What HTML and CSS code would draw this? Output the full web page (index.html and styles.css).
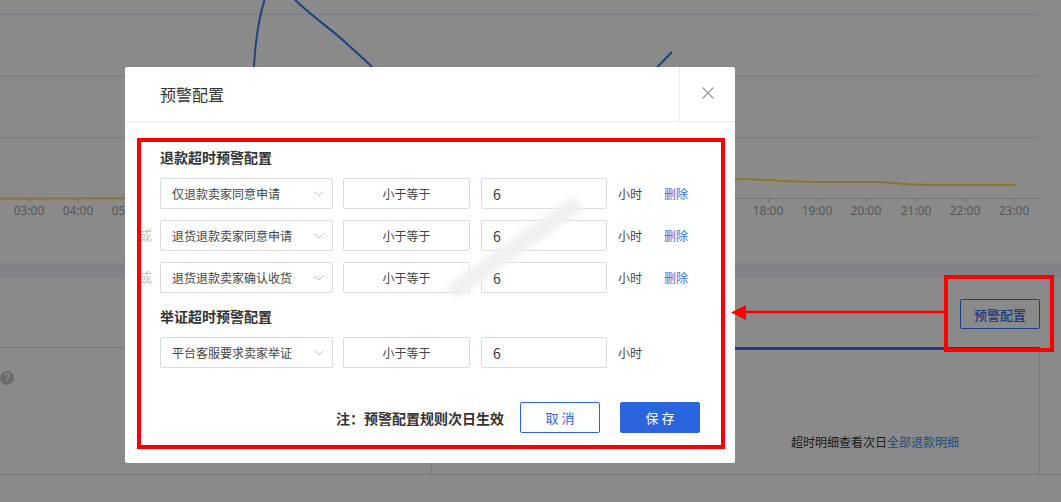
FILE: index.html
```html
<!DOCTYPE html>
<html lang="zh-CN">
<head>
<meta charset="utf-8">
<title>预警配置</title>
<link rel="stylesheet" href="styles.css">
</head>
<body>
<div class="page">
  <div class="chart-area">
    <svg class="chart" width="1061" height="263" viewBox="0 0 1061 263">
      <g stroke="#e0e4f0" stroke-width="1">
        <line x1="0" y1="14.5" x2="1039" y2="14.5"/>
        <line x1="0" y1="76.5" x2="1039" y2="76.5"/>
        <line x1="0" y1="137.5" x2="1039" y2="137.5"/>
      </g>
      <line x1="0" y1="198.5" x2="1039" y2="198.5" stroke="#d8dce6"/>
      <g stroke="#d8dce6">
        <line x1="29.5" y1="198" x2="29.5" y2="203"/><line x1="78.5" y1="198" x2="78.5" y2="203"/><line x1="127.5" y1="198" x2="127.5" y2="203"/>
        <line x1="768.5" y1="198" x2="768.5" y2="203"/><line x1="817.5" y1="198" x2="817.5" y2="203"/><line x1="866.5" y1="198" x2="866.5" y2="203"/>
        <line x1="916.5" y1="198" x2="916.5" y2="203"/><line x1="965.5" y1="198" x2="965.5" y2="203"/><line x1="1014.5" y1="198" x2="1014.5" y2="203"/>
      </g>
      <g class="axis-label" text-anchor="middle">
        <text x="29" y="215">03:00</text><text x="78" y="215">04:00</text><text x="127" y="215">05:00</text>
        <text x="176" y="215">06:00</text><text x="719" y="215">17:00</text>
        <text x="768" y="215">18:00</text><text x="817" y="215">19:00</text><text x="866" y="215">20:00</text>
        <text x="916" y="215">21:00</text><text x="965" y="215">22:00</text><text x="1014" y="215">23:00</text>
      </g>
      <path d="M-10 198.5 L400 198 L735 179 C760 179 790 182 812 182 L880 182 C900 184 915 185 935 185 L1015 185" fill="none" stroke="#ffdd44" stroke-width="2"/>
      <path d="M252 120 C253 60 256 20 268 -10 M286 -10 C300 8 330 28 345 42 C360 56 370 64 385 80 M640 85 L672 52" fill="none" stroke="#3a78f2" stroke-width="2"/>
    </svg>
  </div>
  <div class="band"></div>
  <div class="lower">
    <div class="toolbar">
      <button class="btn-outline" type="button">预警配置</button>
    </div>
    <div class="panel">
      <div class="panel-left">
        <span class="help">?</span>
      </div>
      <div class="panel-right">
        <span class="detail">超时明细查看次日<a class="detail-link">全部退款明细</a></span>
      </div>
    </div>
  </div>
</div>

<div class="mask"></div>

<div class="modal">
  <div class="modal-header">
    <div class="modal-title">预警配置</div>
    <div class="modal-close">
      <svg width="12" height="12" viewBox="0 0 12 12"><path d="M0.5 0.5 L11.5 11.5 M11.5 0.5 L0.5 11.5" stroke="#999" stroke-width="1.3" fill="none"/></svg>
    </div>
  </div>
  <div class="modal-body">
    <div class="section-title">退款超时预警配置</div>
    <div class="rule-row">
      <div class="select">仅退款卖家同意申请<svg class="chev" width="10" height="6" viewBox="0 0 10 6"><path d="M0.5 0.5 L5 5 L9.5 0.5" stroke="#c4c4c4" fill="none"/></svg></div>
      <div class="compare">小于等于</div>
      <div class="num">6</div>
      <span class="unit">小时</span>
      <a class="del">删除</a>
    </div>
    <div class="rule-row">
      <span class="or">或</span>
      <div class="select">退货退款卖家同意申请<svg class="chev" width="10" height="6" viewBox="0 0 10 6"><path d="M0.5 0.5 L5 5 L9.5 0.5" stroke="#c4c4c4" fill="none"/></svg></div>
      <div class="compare">小于等于</div>
      <div class="num">6</div>
      <span class="unit">小时</span>
      <a class="del">删除</a>
    </div>
    <div class="rule-row">
      <span class="or">或</span>
      <div class="select">退货退款卖家确认收货<svg class="chev" width="10" height="6" viewBox="0 0 10 6"><path d="M0.5 0.5 L5 5 L9.5 0.5" stroke="#c4c4c4" fill="none"/></svg></div>
      <div class="compare">小于等于</div>
      <div class="num">6</div>
      <span class="unit">小时</span>
      <a class="del">删除</a>
    </div>
    <div class="section-title second">举证超时预警配置</div>
    <div class="rule-row">
      <div class="select">平台客服要求卖家举证<svg class="chev" width="10" height="6" viewBox="0 0 10 6"><path d="M0.5 0.5 L5 5 L9.5 0.5" stroke="#c4c4c4" fill="none"/></svg></div>
      <div class="compare">小于等于</div>
      <div class="num">6</div>
      <span class="unit">小时</span>
    </div>
    <div class="modal-footer">
      <span class="note">注：预警配置规则次日生效</span>
      <button class="btn-cancel" type="button">取 消</button>
      <button class="btn-save" type="button">保 存</button>
    </div>
  </div>
  <div class="smear"></div>
</div>

<div class="mark-box"></div>
<svg class="mark-arrow" width="220" height="20" viewBox="0 0 220 20">
  <line x1="12" y1="9" x2="215" y2="9" stroke="#ff0000" stroke-width="2.5"/>
  <polygon points="0,9.5 15,2 15,17" fill="#ff0000"/>
</svg>
</body>
</html>
```

FILE: styles.css
```css
* { box-sizing: border-box; }

body {
  margin: 0;
  width: 1061px;
  height: 502px;
  overflow: hidden;
  position: relative;
  background: #ffffff;
  font-family: "Noto Sans CJK SC", "Noto Sans", sans-serif;
  color: #333;
}

.page {
  display: flex;
  flex-direction: column;
  height: 502px;
}

.chart-area {
  height: 263px;
}

.chart {
  display: block;
}

.axis-label {
  font-family: "Noto Sans", sans-serif;
  font-size: 12px;
  fill: #a2a2a2;
}

.band {
  height: 15px;
  background: #eff1f8;
}

.lower {
  display: flex;
  flex-direction: column;
}

.toolbar {
  height: 69px;
  display: flex;
  justify-content: flex-end;
  align-items: flex-start;
  padding: 21px 21px 0 0;
}

.btn-outline {
  width: 80px;
  height: 30px;
  border: 1px solid #3b70f0;
  background: #fff;
  color: #3b70f0;
  font-family: inherit;
  font-size: 13px;
  font-weight: 500;
  border-radius: 2px;
  padding: 0;
}

.panel {
  display: flex;
  height: 128px;
  border-bottom: 1px solid #e2e2e2;
}

.panel-left {
  width: 431px;
  border-top: 1px solid #dedede;
  padding-top: 23px;
}

.help {
  display: block;
  width: 14px;
  height: 14px;
  border-radius: 50%;
  background: #c8c8c8;
  color: #fff;
  font-size: 10px;
  font-weight: bold;
  line-height: 14px;
  text-align: center;
  font-family: "Liberation Sans", sans-serif;
}

.panel-right {
  flex: 1;
  margin-right: 21px;
  border-top: 3px solid #3a72f0;
  border-left: 1px solid #e2e2e2;
  border-right: 1px solid #e2e2e2;
  display: flex;
  justify-content: flex-end;
  align-items: flex-end;
  padding: 0 80px 22px 0;
}

.detail {
  font-size: 12px;
  line-height: 20px;
  color: #333;
}

.detail-link {
  color: #2f8ef2;
}

.mask {
  position: absolute;
  inset: 0;
  background: rgba(0, 0, 0, 0.46);
}

.modal {
  position: absolute;
  left: 125px;
  top: 67px;
  width: 610px;
  height: 396px;
  background: #fff;
  border-radius: 2px;
  overflow: hidden;
}

.modal-header {
  height: 55px;
  display: flex;
  border-bottom: 1px solid #ececec;
}

.modal-title {
  flex: 1;
  padding-left: 35px;
  font-size: 16px;
  line-height: 54px;
  color: #333;
}

.modal-close {
  width: 56px;
  border-left: 1px solid #ececec;
  display: flex;
  align-items: center;
  justify-content: center;
  padding-bottom: 2px;
}

.modal-body {
  margin: 16px 10px 0 12px;
  height: 311px;
  border: 4px solid #ff0000;
  padding: 5px 21px 12px 19px;
  overflow: hidden;
  display: flex;
  flex-direction: column;
}

.section-title {
  font-size: 14px;
  font-weight: bold;
  line-height: 20px;
  color: #333;
}

.section-title.second {
  margin-top: 13px;
}

.rule-row {
  position: relative;
  display: flex;
  align-items: center;
  height: 31px;
  margin-top: 11px;
  font-size: 12px;
}

.or {
  position: absolute;
  left: -21px;
  top: 6px;
  font-size: 13px;
  line-height: 18px;
  color: #c6c6c6;
}

.select {
  width: 173px;
  height: 31px;
  border: 1px solid #dcdcdc;
  border-radius: 2px;
  padding: 0 8px 0 11px;
  display: flex;
  align-items: center;
  justify-content: space-between;
  color: #444;
}

.chev {
  display: block;
}

.compare {
  width: 127px;
  height: 31px;
  margin-left: 10px;
  border: 1px solid #dcdcdc;
  border-radius: 2px;
  display: flex;
  align-items: center;
  justify-content: center;
  color: #444;
}

.num {
  width: 126px;
  height: 31px;
  margin-left: 11px;
  border: 1px solid #dcdcdc;
  border-radius: 2px;
  display: flex;
  align-items: center;
  padding-left: 11px;
  font-size: 14px;
  color: #333;
}

.unit {
  margin-left: 11px;
  color: #444;
}

.del {
  margin-left: 22px;
  color: #3372e2;
}

.modal-footer {
  margin-top: 34px;
  display: flex;
  justify-content: flex-end;
  align-items: center;
  gap: 20px;
}

.note {
  font-size: 14px;
  font-weight: bold;
  color: #333;
  margin-right: -4px;
}

.btn-cancel,
.btn-save {
  width: 80px;
  height: 31px;
  border-radius: 2px;
  font-family: inherit;
  font-size: 13px;
  padding: 0;
}

.btn-cancel {
  border: 1px solid #2a66e0;
  background: #fff;
  color: #2a66e0;
}

.btn-save {
  border: 1px solid #2965de;
  background: #2965de;
  color: #fff;
}

.smear {
  position: absolute;
  left: 312px;
  top: 172px;
  width: 156px;
  height: 17px;
  background: #f0f0f0;
  filter: blur(3px);
  transform: rotate(-35deg);
}

.mark-box {
  position: absolute;
  left: 944px;
  top: 275px;
  width: 110px;
  height: 77px;
  border: 4px solid #ff0000;
}

.mark-arrow {
  position: absolute;
  left: 731px;
  top: 303px;
  display: block;
}
```
